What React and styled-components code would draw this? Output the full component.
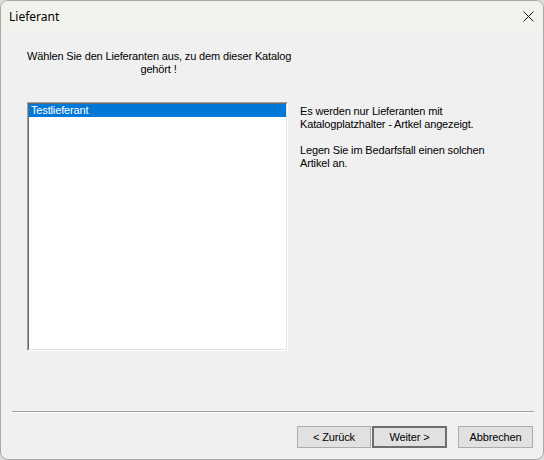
import React from "react";
import styled, { createGlobalStyle } from "styled-components";

const Global = createGlobalStyle`
  html, body { margin: 0; padding: 0; background: #dcdcdc; }
  #root { width: 544px; height: 460px; }
`;

const Window = styled.div`
  box-sizing: border-box;
  width: 544px;
  height: 460px;
  border: 1px solid #a8a8a8;
  border-radius: 8px;
  overflow: hidden;
  display: flex;
  flex-direction: column;
  background: #f0f0f0;
  font-family: "Liberation Sans", Arial, sans-serif;
  font-size: 11px;
  letter-spacing: -0.15px;
  color: #000;
`;

const TitleBar = styled.div`
  height: 30px;
  flex: none;
  display: flex;
  align-items: center;
  justify-content: space-between;
  padding: 0 10px 0 8px;
  background: #f3f3ee;
`;

const Title = styled.span`
  font-family: "Segoe UI", "Noto Sans", "Open Sans", sans-serif;
  font-size: 12px;
  letter-spacing: 0;
  color: #000;
  padding-top: 1px;
`;

const CloseButton = styled.button`
  width: 20px;
  height: 20px;
  border: none;
  background: transparent;
  padding: 0;
  display: flex;
  align-items: center;
  justify-content: center;
  margin-right: -5px;
`;

const Client = styled.div`
  flex: 1;
  display: flex;
  flex-direction: column;
  padding: 0 9px 11px 11px;
`;

const Prompt = styled.div`
  width: 263px;
  margin: 19px 0 0 15px;
  text-align: center;
  line-height: 13px;
  white-space: nowrap;
`;

const Body = styled.div`
  display: flex;
  gap: 12px;
  margin: 26px 0 0 15px;
`;

const ListBox = styled.div`
  box-sizing: border-box;
  width: 261px;
  height: 249px;
  background: #fff;
  border-style: solid;
  border-width: 1px;
  border-color: #a0a0a0 #ffffff #ffffff #a0a0a0;
  flex: none;
`;

const ListInner = styled.div`
  height: 100%;
  box-sizing: border-box;
  border-style: solid;
  border-width: 1px;
  border-color: #696969 #e3e3e3 #e3e3e3 #696969;
`;

const ListItem = styled.div`
  height: 13px;
  line-height: 13px;
  padding-left: 2px;
  background: ${(p) => (p.$selected ? "#0078d7" : "transparent")};
  color: ${(p) => (p.$selected ? "#fff" : "#000")};
  white-space: nowrap;
`;

const Note = styled.div`
  margin-top: 3px;
  line-height: 13px;
  display: flex;
  flex-direction: column;
  gap: 13px;
  white-space: nowrap;
`;

const Separator = styled.div`
  margin-top: auto;
  height: 1px;
  background: #a0a0a0;
  border-bottom: 1px solid #ffffff;
`;

const ButtonRow = styled.div`
  display: flex;
  justify-content: flex-end;
  margin-top: 13px;
  margin-right: 1px;
`;

const Button = styled.button`
  box-sizing: border-box;
  width: ${(p) => p.$width || 75}px;
  height: 22px;
  margin-left: ${(p) => p.$gap || 0}px;
  padding: 0;
  font-family: "Liberation Sans", Arial, sans-serif;
  font-size: 11px;
  letter-spacing: -0.15px;
  color: #000;
  background: #e1e1e1;
  border: ${(p) => (p.$default ? "2px solid #6e6e6e" : "1px solid #adadad")};
`;

export default function App() {
  return (
    <>
      <Global />
      <Window>
        <TitleBar>
          <Title>Lieferant</Title>
          <CloseButton aria-label="Schließen">
            <svg width="11" height="11" viewBox="0 0 11 11">
              <path d="M0.5 0.5 L10.5 10.5 M10.5 0.5 L0.5 10.5" stroke="#1a1a1a" strokeWidth="1" fill="none" />
            </svg>
          </CloseButton>
        </TitleBar>
        <Client>
          <Prompt>
            Wählen Sie den Lieferanten aus, zu dem dieser Katalog
            <br />
            gehört !
          </Prompt>
          <Body>
            <ListBox>
              <ListInner>
                <ListItem $selected>Testlieferant</ListItem>
              </ListInner>
            </ListBox>
            <Note>
              <div>
                Es werden nur Lieferanten mit
                <br />
                Katalogplatzhalter - Artkel angezeigt.
              </div>
              <div>
                Legen Sie im Bedarfsfall einen solchen
                <br />
                Artikel an.
              </div>
            </Note>
          </Body>
          <Separator />
          <ButtonRow>
            <Button $width={74}>&lt; Zurück</Button>
            <Button $default $gap={1}>Weiter &gt;</Button>
            <Button $gap={11}>Abbrechen</Button>
          </ButtonRow>
        </Client>
      </Window>
    </>
  );
}
